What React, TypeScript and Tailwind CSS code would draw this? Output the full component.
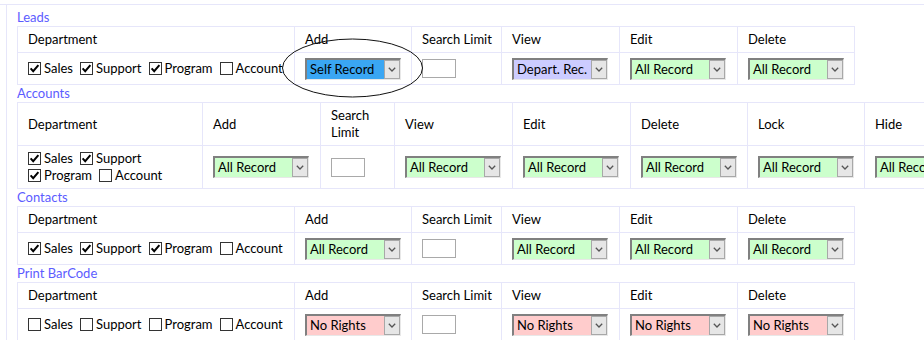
import React from 'react';

type Tone = 'blue' | 'green' | 'lavender' | 'pink';

const toneBg: Record<Tone, string> = {
  blue: 'bg-[#3aa6f3]',
  green: 'bg-[#ccffcc]',
  lavender: 'bg-[#ccccff]',
  pink: 'bg-[#ffcccc]',
};

function Check({ on, label }: { on: boolean; label: string }) {
  return (
    <span className="inline-flex items-center mr-[7px]">
      <svg width="13" height="13" viewBox="0 0 13 13" className="shrink-0">
        <rect x="0.5" y="0.5" width="12" height="12" fill="#fff" stroke="#333" />
        {on && <path d="M2.6 6.4 L5.2 9.2 L10.4 3.2" fill="none" stroke="#000" strokeWidth="2" />}
      </svg>
      <span className="ml-[3px]">{label}</span>
    </span>
  );
}

function Select({ value, tone }: { value: string; tone: Tone }) {
  return (
    <div className="flex w-[96px] h-[22px] border-t-2 border-l-2 border-t-[#808080] border-l-[#808080] border-r border-b border-r-[#e8e8e8] border-b-[#e8e8e8]">
      <span className={`flex-1 flex items-center pl-[3px] leading-none ${toneBg[tone]}`}>{value}</span>
      <span className="w-[16px] h-[19px] border border-[#a8a8a8] bg-[#e6e6e6] flex items-center justify-center">
        <svg width="8" height="5" viewBox="0 0 8 5">
          <path d="M0.8 0.8 L4 4 L7.2 0.8" fill="none" stroke="#555" strokeWidth="1.3" />
        </svg>
      </span>
    </div>
  );
}

function Limit() {
  return <div className="w-[34px] h-[19px] border border-[#a9a9a9] bg-white" />;
}

interface Col {
  name: string;
  w: string;
  kind: 'dept' | 'limit' | 'sel';
  value?: string;
  tone?: Tone;
}

interface Section {
  title: string;
  cols: Col[];
  checks: boolean[];
  headH: string;
  rowH: string;
}

const depts = ['Sales', 'Support', 'Program', 'Account'];

const std = (add: [string, Tone], view: [string, Tone], rest: [string, Tone]): Col[] => [
  { name: 'Department', w: 'w-[277px]', kind: 'dept' },
  { name: 'Add', w: 'w-[117px]', kind: 'sel', value: add[0], tone: add[1] },
  { name: 'Search Limit', w: 'w-[90px]', kind: 'limit' },
  { name: 'View', w: 'w-[118px]', kind: 'sel', value: view[0], tone: view[1] },
  { name: 'Edit', w: 'w-[118px]', kind: 'sel', value: rest[0], tone: rest[1] },
  { name: 'Delete', w: 'w-[117px]', kind: 'sel', value: rest[0], tone: rest[1] },
];

const all: [string, Tone] = ['All Record', 'green'];
const none: [string, Tone] = ['No Rights', 'pink'];

const sections: Section[] = [
  {
    title: 'Leads',
    cols: std(['Self Record', 'blue'], ['Depart. Rec.', 'lavender'], all),
    checks: [true, true, true, false],
    headH: 'h-[26px]',
    rowH: 'h-[32px]',
  },
  {
    title: 'Accounts',
    cols: [
      { name: 'Department', w: 'w-[185px]', kind: 'dept' },
      { name: 'Add', w: 'w-[118px]', kind: 'sel', value: 'All Record', tone: 'green' },
      { name: 'Search Limit', w: 'w-[74px]', kind: 'limit' },
      { name: 'View', w: 'w-[118px]', kind: 'sel', value: 'All Record', tone: 'green' },
      { name: 'Edit', w: 'w-[118px]', kind: 'sel', value: 'All Record', tone: 'green' },
      { name: 'Delete', w: 'w-[117px]', kind: 'sel', value: 'All Record', tone: 'green' },
      { name: 'Lock', w: 'w-[117px]', kind: 'sel', value: 'All Record', tone: 'green' },
      { name: 'Hide', w: 'w-[117px]', kind: 'sel', value: 'All Record', tone: 'green' },
    ],
    checks: [true, true, true, false],
    headH: 'h-[43px]',
    rowH: 'h-[43px]',
  },
  {
    title: 'Contacts',
    cols: std(all, all, all),
    checks: [true, true, true, false],
    headH: 'h-[26px]',
    rowH: 'h-[32px]',
  },
  {
    title: 'Print BarCode',
    cols: std(none, none, none),
    checks: [false, false, false, false],
    headH: 'h-[26px]',
    rowH: 'h-[32px]',
  },
];

function Table({ s }: { s: Section }) {
  return (
    <div className="border-l border-t border-[#e6e6fa] w-max">
      <div className="flex">
        {s.cols.map(c => (
          <div key={c.name} className={`${c.w} ${s.headH} shrink-0 border-r border-b border-[#e6e6fa] pl-[10px] pr-[4px] flex items-center leading-[17px]`}>
            {c.name}
          </div>
        ))}
      </div>
      <div className="flex">
        {s.cols.map(c => (
          <div key={c.name} className={`${c.w} ${s.rowH} shrink-0 border-r border-b border-[#e6e6fa] pl-[10px] flex items-center`}>
            {c.kind === 'dept' && (
              <div className="flex flex-wrap leading-[17px]">
                {depts.map((d, i) => <Check key={d} on={s.checks[i]} label={d} />)}
              </div>
            )}
            {c.kind === 'limit' && <Limit />}
            {c.kind === 'sel' && <Select value={c.value!} tone={c.tone!} />}
          </div>
        ))}
      </div>
    </div>
  );
}

export default function App() {
  return (
    <div className="w-[924px] h-[340px] overflow-hidden bg-white text-[13px] text-black font-['Lato',sans-serif]">
      <div className="mt-[4px] border-t border-[#e6e6fa]">
        <div className="relative ml-[6px] border-l border-[#e6e6fa] pl-[10px] pt-[4px] pb-[40px]">
          {sections.map(s => (
            <div key={s.title}>
              <div className="h-[17px] flex items-center text-[#5c5cff]">{s.title}</div>
              <Table s={s} />
            </div>
          ))}
          <svg className="absolute left-0 top-0 pointer-events-none" width="500" height="120" viewBox="0 0 500 120">
            <ellipse cx="345.5" cy="63" rx="70" ry="29" fill="none" stroke="#111" strokeWidth="1" />
          </svg>
        </div>
      </div>
    </div>
  );
}
